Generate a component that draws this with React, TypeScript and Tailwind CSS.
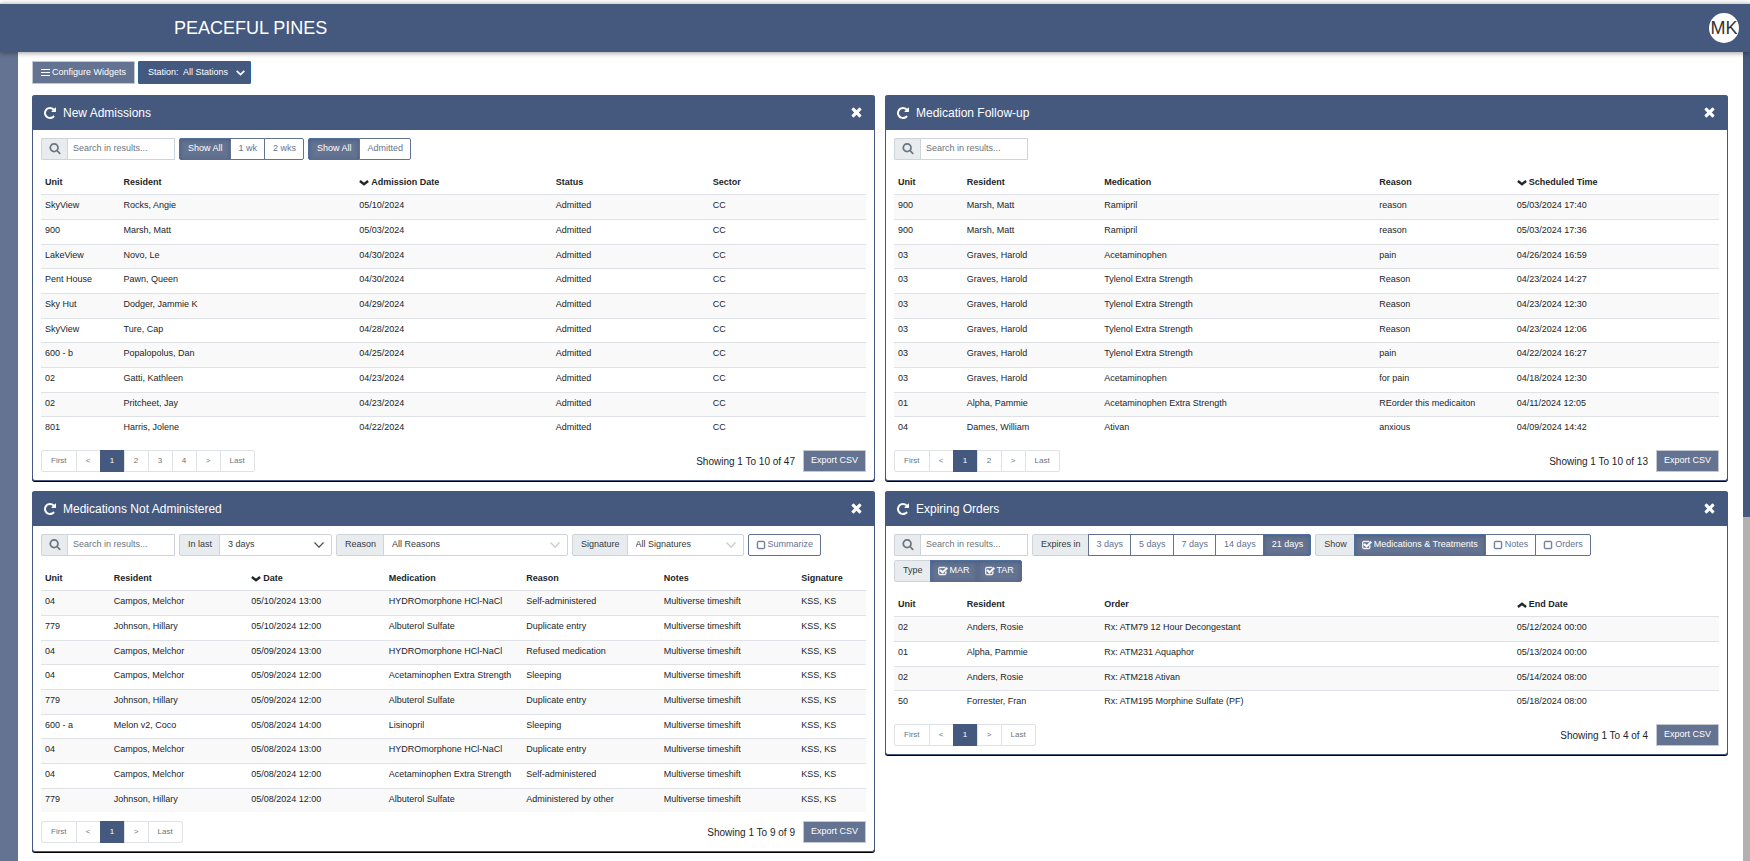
import { useId, useState } from "react";
import type { ReactNode } from "react";
import clsx from "clsx";

const ICONS = {
  search: {
    viewBox: "0 128 1792 1792",
    d: "M1216 832q0-185-131.5-316.5t-316.5-131.5-316.5 131.5-131.5 316.5 131.5 316.5 316.5 131.5 316.5-131.5 131.5-316.5zm512 832q0 52-38 90t-90 38q-54 0-90-38l-343-342q-179 124-399 124-143 0-273.5-55.5t-225-150-150-225-55.5-273.5 55.5-273.5 150-225 225-150 273.5-55.5 273.5 55.5 225 150 150 225 55.5 273.5q0 220-124 399l343 343q37 37 37 90z",
  },
  refresh: {
    viewBox: "0 0 1792 1792",
    d: "M1664 256v448q0 26-19 45t-45 19h-448q-42 0-59-40-17-39 14-69l138-138q-148-137-349-137-104 0-198.5 40.5t-163.5 109.5-109.5 163.5-40.5 198.5 40.5 198.5 109.5 163.5 163.5 109.5 198.5 40.5q119 0 225-52t179-147q7-10 23-12 15 0 25 9l137 138q9 8 9.5 20.5t-7.5 22.5q-109 132-264 204.5t-327 72.5q-156 0-298-61t-245-164-164-245-61-298 61-298 164-245 245-164 298-61q147 0 284.5 55.5t244.5 156.5l130-129q29-31 70-14 39 17 39 59z",
  },
  close: {
    viewBox: "0 64 1792 1792",
    d: "M1490 1322q0 40-28 68l-136 136q-28 28-68 28t-68-28l-294-294-294 294q-28 28-68 28t-68-28l-136-136q-28-28-28-68t28-68l294-294-294-294q-28-28-28-68t28-68l136-136q28-28 68-28t68 28l294 294 294-294q28-28 68-28t68 28l136 136q28 28 28 68t-28 68l-294 294 294 294q28 28 28 68z",
  },
  checked: {
    viewBox: "-64 -64 1792 1792",
    d: "M1408 930v318q0 119-84.5 203.5T1120 1536H288q-119 0-203.5-84.5T0 1248V416q0-119 84.5-203.5T288 128h832q63 0 117 25 15 7 18 23 3 17-9 29l-49 49q-10 10-23 10-3 0-9-2-23-6-45-6H288q-66 0-113 47t-47 113v832q0 66 47 113t113 47h832q66 0 113-47t47-113V994q0-13 9-22l64-64q10-10 23-10 6 0 12 3 20 8 20 29zm231-489l-814 814q-24 24-57 24t-57-24L281 825q-24-24-24-57t24-57l110-110q24-24 57-24t57 24l263 263 647-647q24-24 57-24t57 24l110 110q24 24 24 57t-24 57z",
  },
  unchecked: {
    viewBox: "0 -64 1792 1792",
    d: "M1312 256H480q-66 0-113 47t-47 113v832q0 66 47 113t113 47h832q66 0 113-47t47-113V416q0-66-47-113t-113-47zm288 160v832q0 119-84.5 203.5T1312 1536H480q-119 0-203.5-84.5T192 1248V416q0-119 84.5-203.5T480 128h832q119 0 203.5 84.5T1600 416z",
  },
};

function Icon({ name, className }: { name: keyof typeof ICONS; className?: string }) {
  const outlined = name === "unchecked" || name === "checked";
  return (
    <svg viewBox={ICONS[name].viewBox} className={clsx("shrink-0 fill-current", className)} aria-hidden="true">
      <path d={ICONS[name].d} stroke="currentColor" strokeWidth={outlined ? 100 : 0} />
    </svg>
  );
}

function SortArrow({ direction }: { direction: "asc" | "desc" }) {
  return (
    <svg
      viewBox="0 0 10 6"
      className={clsx("h-[6px] w-[10px] shrink-0", direction === "asc" && "rotate-180")}
      fill="none"
      stroke="currentColor"
      strokeWidth="2.4"
      aria-hidden="true"
    >
      <path d="M.9 1 5 4.200 9.100 1" />
    </svg>
  );
}

function SearchBox() {
  const id = useId();
  return (
    <div className="flex h-[22px]">
      <label
        htmlFor={id}
        aria-label="Search"
        className="flex w-[26px] items-center justify-center rounded-l-xs border border-r-0 border-[#ced4da] bg-[#e9ecef] text-[#6c757d]"
      >
        <Icon name="search" className="size-[12px]" />
      </label>
      <input
        id={id}
        type="text"
        placeholder="Search in results..."
        className="w-[108px] border border-[#ced4da] bg-white px-[5px] outline-none placeholder:text-[#6c757d]"
      />
    </div>
  );
}

function Addon({ htmlFor, children }: { htmlFor?: string; children: ReactNode }) {
  const style =
    "flex h-[22px] items-center rounded-l-xs border border-[#ced4da] bg-[#e9ecef] pr-[7px] pl-2 text-[#343a40]";
  return htmlFor ? (
    <label htmlFor={htmlFor} className={style}>
      {children}
    </label>
  ) : (
    <span className={style}>{children}</span>
  );
}

const segment = "-ml-px flex h-[22px] items-center border first:ml-0 first:rounded-l-xs last:rounded-r-xs";
const segmentOn = "border-[#4f709c] bg-[#647391] text-white shadow-[inset_0_1px_4px_rgba(50,70,110,0.5)]";
const segmentOff = "border-[#647391] bg-white text-[#647391]";

function ButtonGroup({ label, options, initial }: { label?: string; options: string[]; initial: string }) {
  const [value, setValue] = useState(initial);
  return (
    <div className="flex" role="group" aria-label={label}>
      {label ? <Addon>{label}</Addon> : null}
      {options.map((option) => (
        <button
          key={option}
          type="button"
          aria-pressed={option === value}
          onClick={() => setValue(option)}
          className={clsx(segment, "pr-[7px] pl-2", option === value ? segmentOn : segmentOff)}
        >
          {option}
        </button>
      ))}
    </div>
  );
}

function Toggle({ label, initial = false }: { label: string; initial?: boolean }) {
  const [on, setOn] = useState(initial);
  return (
    <label className={clsx(segment, "relative gap-[2px] px-[7px]", on ? segmentOn : segmentOff)}>
      <input type="checkbox" className="sr-only" checked={on} onChange={() => setOn(!on)} />
      <Icon name={on ? "checked" : "unchecked"} className="size-[10px]" />
      {label}
    </label>
  );
}

interface SelectFieldProps {
  label: string;
  value: string;
  width: string;
  muted?: boolean;
}

function SelectField({ label, value, width, muted }: SelectFieldProps) {
  const id = useId();
  return (
    <div className="flex">
      <Addon htmlFor={id}>{label}</Addon>
      <div className={clsx("relative -ml-px", width)}>
        <select
          id={id}
          defaultValue={value}
          className="h-[22px] w-full appearance-none rounded-r-xs border border-[#ced4da] bg-white px-2 text-[#343a40] outline-none"
        >
          <option>{value}</option>
        </select>
        <svg
          viewBox="0 0 10 6"
          className={clsx(
            "pointer-events-none absolute top-2 right-2 h-[6px] w-[10px]",
            muted ? "text-[#c4c8cc]" : "text-[#495057]",
          )}
          fill="none"
          stroke="currentColor"
          strokeWidth="1.2"
        >
          <path d="M.5.5 5 5.200 9.500.5" />
        </svg>
      </div>
    </div>
  );
}

interface Column {
  name: string;
  width: string;
  sort?: "asc" | "desc";
}

function DataTable({ columns, rows }: { columns: Column[]; rows: string[][] }) {
  return (
    <table className="mt-2 w-full table-fixed border-separate border-spacing-0 text-left text-[#212529]">
      <thead>
        <tr>
          {columns.map((col) => (
            <th key={col.name} className={clsx("h-[26px] px-1 pt-[3px] pb-0 align-middle font-bold", col.width)}>
              <span className="flex items-center gap-[2px]">
                {col.sort ? <SortArrow direction={col.sort} /> : null}
                {col.name}
              </span>
            </th>
          ))}
        </tr>
      </thead>
      <tbody>
        {rows.map((row, i) => (
          <tr key={i} className="h-[25px] odd:bg-[#f9f9f9] nth-[3n]:h-6">
            {row.map((cell, j) => (
              <td
                key={j}
                className="border-t border-[#dee2e6] pt-1 pr-0 pb-0 pl-1 align-top leading-3 whitespace-nowrap"
              >
                {cell}
              </td>
            ))}
          </tr>
        ))}
      </tbody>
    </table>
  );
}

function Pagination({ pages }: { pages: number }) {
  const numbers = Array.from({ length: pages }, (_, i) => String(i + 1));
  return (
    <nav className="flex text-[8px] text-[#6c757d]" aria-label="Pages">
      {["First", "<", ...numbers, ">", "Last"].map((item) => (
        <button
          key={item}
          type="button"
          className={clsx(
            "-ml-px flex h-[22px] min-w-[25px] items-center justify-center border px-2 first:ml-0 first:rounded-l-xs first:px-[9px] last:rounded-r-xs last:px-[9px]",
            item === "1" ? "border-[#45597f] bg-[#45597f] text-white" : "border-[#dee2e6] bg-white",
          )}
        >
          {item}
        </button>
      ))}
    </nav>
  );
}

interface WidgetProps {
  title: string;
  filters: ReactNode;
  columns: Column[];
  rows: string[][];
  pages: number;
  summary: string;
}

function Widget({ title, filters, columns, rows, pages, summary }: WidgetProps) {
  return (
    <section className="rounded-[3px] border border-t-0 border-[#45597f] bg-white shadow-[0_1px_0_#000]">
      <header className="-mx-px flex h-[35px] items-center rounded-t-[3px] bg-[#45597f] px-[11px] text-white">
        <button type="button" aria-label={`Refresh ${title}`}>
          <Icon name="refresh" className="size-[14px]" />
        </button>
        <h2 className="ml-[6px] text-[12px]">{title}</h2>
        <button type="button" aria-label={`Close ${title}`} className="ml-auto">
          <Icon name="close" className="size-[15px]" />
        </button>
      </header>
      <div className="p-2">
        {filters}
        <DataTable columns={columns} rows={rows} />
        <footer className="mt-[9px] flex items-center">
          <Pagination pages={pages} />
          <span className="mr-2 ml-auto text-[10px] text-[#212529]">{summary}</span>
          <button type="button" className="h-[22px] border border-[#c4c9d1] bg-[#647391] px-[7px] text-white">
            Export CSV
          </button>
        </footer>
      </div>
    </section>
  );
}

const admissions = [
  ["SkyView", "Rocks, Angie", "05/10/2024", "Admitted", "CC"],
  ["900", "Marsh, Matt", "05/03/2024", "Admitted", "CC"],
  ["LakeView", "Novo, Le", "04/30/2024", "Admitted", "CC"],
  ["Pent House", "Pawn, Queen", "04/30/2024", "Admitted", "CC"],
  ["Sky Hut", "Dodger, Jammie K", "04/29/2024", "Admitted", "CC"],
  ["SkyView", "Ture, Cap", "04/28/2024", "Admitted", "CC"],
  ["600 - b", "Popalopolus, Dan", "04/25/2024", "Admitted", "CC"],
  ["02", "Gatti, Kathleen", "04/23/2024", "Admitted", "CC"],
  ["02", "Pritcheet, Jay", "04/23/2024", "Admitted", "CC"],
  ["801", "Harris, Jolene", "04/22/2024", "Admitted", "CC"],
];

const followUps = [
  ["900", "Marsh, Matt", "Ramipril", "reason", "05/03/2024 17:40"],
  ["900", "Marsh, Matt", "Ramipril", "reason", "05/03/2024 17:36"],
  ["03", "Graves, Harold", "Acetaminophen", "pain", "04/26/2024 16:59"],
  ["03", "Graves, Harold", "Tylenol Extra Strength", "Reason", "04/23/2024 14:27"],
  ["03", "Graves, Harold", "Tylenol Extra Strength", "Reason", "04/23/2024 12:30"],
  ["03", "Graves, Harold", "Tylenol Extra Strength", "Reason", "04/23/2024 12:06"],
  ["03", "Graves, Harold", "Tylenol Extra Strength", "pain", "04/22/2024 16:27"],
  ["03", "Graves, Harold", "Acetaminophen", "for pain", "04/18/2024 12:30"],
  ["01", "Alpha, Pammie", "Acetaminophen Extra Strength", "REorder this medicaiton", "04/11/2024 12:05"],
  ["04", "Dames, William", "Ativan", "anxious", "04/09/2024 14:42"],
];

const notAdministered = [
  ["04", "Campos, Melchor", "05/10/2024 13:00", "HYDROmorphone HCl-NaCl", "Self-administered"],
  ["779", "Johnson, Hillary", "05/10/2024 12:00", "Albuterol Sulfate", "Duplicate entry"],
  ["04", "Campos, Melchor", "05/09/2024 13:00", "HYDROmorphone HCl-NaCl", "Refused medication"],
  ["04", "Campos, Melchor", "05/09/2024 12:00", "Acetaminophen Extra Strength", "Sleeping"],
  ["779", "Johnson, Hillary", "05/09/2024 12:00", "Albuterol Sulfate", "Duplicate entry"],
  ["600 - a", "Melon v2, Coco", "05/08/2024 14:00", "Lisinopril", "Sleeping"],
  ["04", "Campos, Melchor", "05/08/2024 13:00", "HYDROmorphone HCl-NaCl", "Duplicate entry"],
  ["04", "Campos, Melchor", "05/08/2024 12:00", "Acetaminophen Extra Strength", "Self-administered"],
  ["779", "Johnson, Hillary", "05/08/2024 12:00", "Albuterol Sulfate", "Administered by other"],
].map((row) => [...row, "Multiverse timeshift", "KSS, KS"]);

const expiring = [
  ["02", "Anders, Rosie", "Rx: ATM79 12 Hour Decongestant", "05/12/2024 00:00"],
  ["01", "Alpha, Pammie", "Rx: ATM231 Aquaphor", "05/13/2024 00:00"],
  ["02", "Anders, Rosie", "Rx: ATM218 Ativan", "05/14/2024 08:00"],
  ["50", "Forrester, Fran", "Rx: ATM195 Morphine Sulfate (PF)", "05/18/2024 08:00"],
];

export default function App() {
  return (
    <div className="flex min-h-screen flex-col bg-white pt-[3px] font-['Liberation_Sans',Arial,sans-serif] text-[9px]">
      <header className="relative border-t border-[#d8d8d8] bg-[#45597f] shadow-[0_1px_5px_rgba(0,0,0,0.4)]">
        <div className="flex h-12 items-center pr-[11px] pl-[174px]">
          <h1 className="text-[18px] text-white">PEACEFUL PINES</h1>
          <button
            type="button"
            className="ml-auto flex size-[30px] items-center justify-center rounded-full bg-white text-[18px] text-[#333]"
          >
            MK
          </button>
        </div>
      </header>

      <div className="flex grow">
        <aside className="w-[18px] shrink-0 bg-[#647391]" />

        <main className="min-w-0 grow pt-[9px] pr-[15px] pb-2 pl-[14px]">
          <div className="flex gap-[3px] text-white">
            <button
              type="button"
              className="flex h-[23px] items-center gap-[2px] border border-[#c4c9d1] bg-[#647391] px-2"
            >
              <svg viewBox="0 0 9 9" className="size-[9px]" stroke="currentColor" strokeWidth="1">
                <path d="M0 1.500h9M0 4.500h9M0 7.500h9" />
              </svg>
              Configure Widgets
            </button>
            <button
              type="button"
              className="flex h-[23px] items-center rounded-[1px] border border-[#2a6496] bg-[#45597f] pr-[5px] pl-[9px]"
            >
              Station:&nbsp; All Stations
              <svg viewBox="0 0 9 6" className="ml-2 h-[6px] w-[9px]" fill="none" stroke="currentColor" strokeWidth="1.7">
                <path d="M.7.8 4.500 4.600 8.300.8" />
              </svg>
            </button>
          </div>

          <div className="mt-[11px] grid grid-cols-1 items-start gap-[10px] lg:grid-cols-2">
            <Widget
              title="New Admissions"
              filters={
                <div className="flex flex-wrap gap-1">
                  <SearchBox />
                  <ButtonGroup options={["Show All", "1 wk", "2 wks"]} initial="Show All" />
                  <ButtonGroup options={["Show All", "Admitted"]} initial="Show All" />
                </div>
              }
              columns={[
                { name: "Unit", width: "w-2/21" },
                { name: "Resident", width: "w-6/21" },
                { name: "Admission Date", width: "w-5/21", sort: "desc" },
                { name: "Status", width: "w-4/21" },
                { name: "Sector", width: "w-4/21" },
              ]}
              rows={admissions}
              pages={4}
              summary="Showing 1 To 10 of 47"
            />

            <Widget
              title="Medication Follow-up"
              filters={<SearchBox />}
              columns={[
                { name: "Unit", width: "w-1/12" },
                { name: "Resident", width: "w-2/12" },
                { name: "Medication", width: "w-4/12" },
                { name: "Reason", width: "w-2/12" },
                { name: "Scheduled Time", width: "w-3/12", sort: "desc" },
              ]}
              rows={followUps}
              pages={2}
              summary="Showing 1 To 10 of 13"
            />

            <Widget
              title="Medications Not Administered"
              filters={
                <div className="flex flex-wrap gap-1">
                  <SearchBox />
                  <SelectField label="In last" value="3 days" width="w-[113px]" />
                  <SelectField label="Reason" value="All Reasons" width="w-[185px]" muted />
                  <SelectField label="Signature" value="All Signatures" width="w-[117px]" muted />
                  <div className="flex">
                    <Toggle label="Summarize" />
                  </div>
                </div>
              }
              columns={[
                { name: "Unit", width: "w-1/12" },
                { name: "Resident", width: "w-2/12" },
                { name: "Date", width: "w-2/12", sort: "desc" },
                { name: "Medication", width: "w-2/12" },
                { name: "Reason", width: "w-2/12" },
                { name: "Notes", width: "w-2/12" },
                { name: "Signature", width: "w-1/12" },
              ]}
              rows={notAdministered}
              pages={1}
              summary="Showing 1 To 9 of 9"
            />

            <Widget
              title="Expiring Orders"
              filters={
                <div className="flex flex-col gap-1">
                  <div className="flex flex-wrap gap-1">
                    <SearchBox />
                    <ButtonGroup
                      label="Expires in"
                      options={["3 days", "5 days", "7 days", "14 days", "21 days"]}
                      initial="21 days"
                    />
                    <div className="flex">
                      <Addon>Show</Addon>
                      <Toggle label="Medications & Treatments" initial />
                      <Toggle label="Notes" />
                      <Toggle label="Orders" />
                    </div>
                  </div>
                  <div className="flex">
                    <Addon>Type</Addon>
                    <Toggle label="MAR" initial />
                    <Toggle label="TAR" initial />
                  </div>
                </div>
              }
              columns={[
                { name: "Unit", width: "w-1/12" },
                { name: "Resident", width: "w-2/12" },
                { name: "Order", width: "w-6/12" },
                { name: "End Date", width: "w-3/12", sort: "asc" },
              ]}
              rows={expiring}
              pages={1}
              summary="Showing 1 To 4 of 4"
            />
          </div>
        </main>

        <div className="w-[7px] shrink-0 bg-[#b2b0b0]">
          <div className="h-23/40 bg-[#45597f]" />
        </div>
      </div>
    </div>
  );
}
